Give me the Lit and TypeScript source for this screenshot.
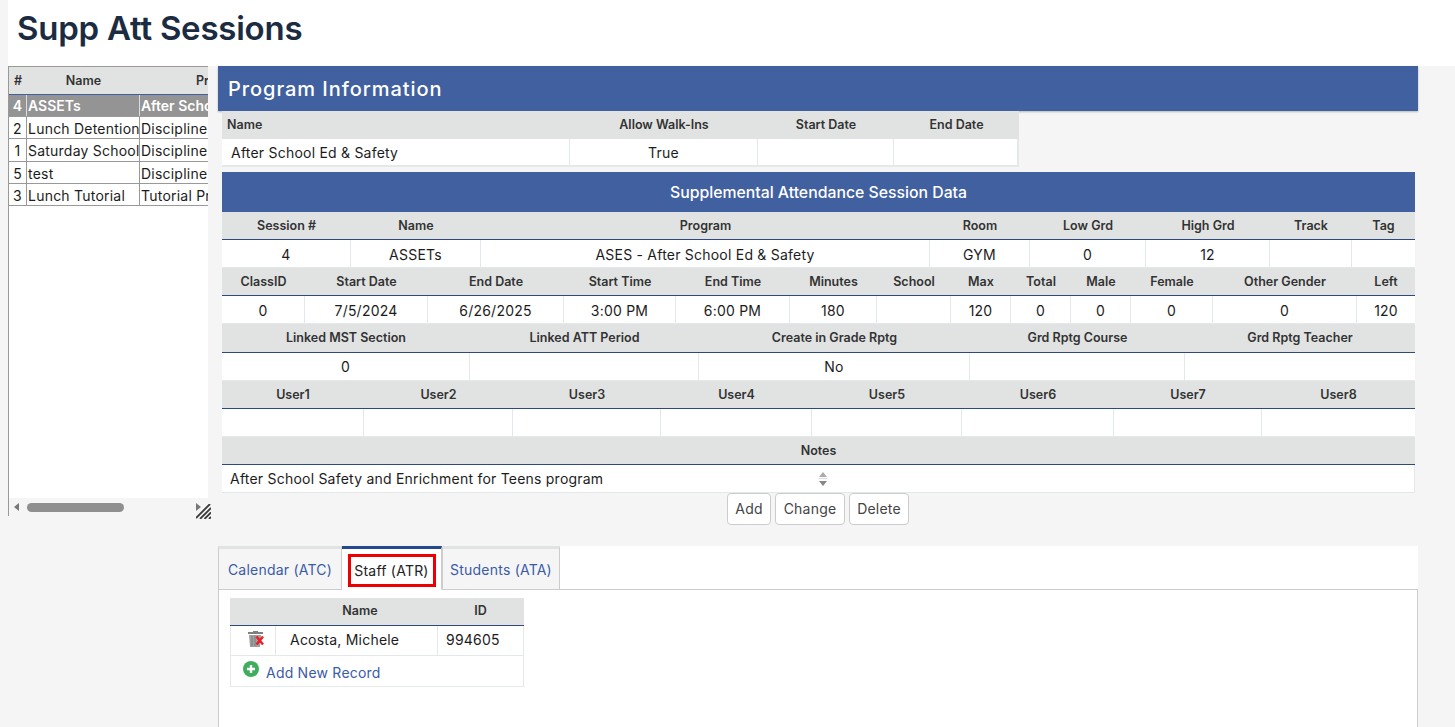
import { LitElement, html, css } from "lit";
import { customElement } from "lit/decorators.js";

type Cell = string;
const bands: { edges: number[]; head: Cell[]; row: Cell[]; h: number }[] = [
  { edges: [222,351,481,930,1030,1146,1270,1352,1415], head: ["Session #","Name","Program","Room","Low Grd","High Grd","Track","Tag"], row: ["4","ASSETs","ASES - After School Ed & Safety","GYM","0","12","",""], h: 28 },
  { edges: [222,305,428,564,676,790,877,951,1011,1071,1131,1213,1357,1415], head: ["ClassID","Start Date","End Date","Start Time","End Time","Minutes","School","Max","Total","Male","Female","Other Gender","Left"], row: ["0","7/5/2024","6/26/2025","3:00 PM","6:00 PM","180","","120","0","0","0","0","120"], h: 28 },
  { edges: [222,470,699,970,1185,1415], head: ["Linked MST Section","Linked ATT Period","Create in Grade Rptg","Grd Rptg Course","Grd Rptg Teacher"], row: ["0","","No","",""], h: 28.5 },
  { edges: [222,364,513,661,812,962,1114,1262,1415], head: ["User1","User2","User3","User4","User5","User6","User7","User8"], row: ["","","","","","","",""], h: 28 },
];
const tpl = (e: number[]) => e.slice(1).map((v, i) => `${v - e[i]}px`).join(" ");
const side = [
  ["4","ASSETs","After School Ed & Safety",22],
  ["2","Lunch Detention","Discipline Program",22],
  ["1","Saturday School","Discipline Program",23],
  ["5","test","Discipline Program",22],
  ["3","Lunch Tutorial","Tutorial Program",22],
] as [string,string,string,number][];

@customElement("app-root")
export class AppRoot extends LitElement {
  static styles = css`
    :host { display: block; position: relative; width: 1455px; height: 727px; overflow: hidden; background: #f5f5f5; font-family: Inter, "Noto Sans", sans-serif; font-size: 14px; letter-spacing: 0.22px; color: #1c1c1c; }
    * { box-sizing: border-box; }
    .title { margin: 0 0 0 8px; height: 66px; background: #fff; padding: 8px 0 0 9px; font-size: 33px; font-weight: 600; line-height: 40px; color: #1b2c42; letter-spacing: -0.23px; }
    .main { display: flex; align-items: flex-start; padding-left: 8px; }
    .side { position: relative; width: 200px; height: 450px; background: #fff; border-top: 1px solid #999; border-left: 1px solid #999; overflow: hidden; flex: none; }
    .shead, .srow { display: grid; grid-template-columns: 18px 113px 200px; width: 331px; }
    .shead { height: 28px; background: #e1e3e3; border-bottom: 1px solid #41609f; font-size: 12.5px; letter-spacing: 0; font-weight: 600; align-items: center; color: #333; text-align: center; }
    .shead span:last-child { text-align: left; padding-left: 56px; }
    .srow { border-bottom: 1px solid #999; line-height: 24px; white-space: nowrap; }
    .srow span { border-right: 1px solid #999; padding-left: 1px; overflow: hidden; }
    .srow span:first-child { text-align: center; padding: 0; }
    .srow.sel { background: #949494; color: #fff; font-weight: 600; line-height: 22px; letter-spacing: 0; }
    .srow.sel span { border-right-color: #ddd; }
    .hscroll { position: absolute; left: 0; right: 0; bottom: 0; height: 18px; background: #f5f5f5; }
    .hinner { display: flex; align-items: center; height: 18px; padding-left: 5px; }
    .thumb { width: 97px; height: 9px; border-radius: 5px; background: #8f8f8f; margin-left: 8px; }
    .arrow { width: 0; height: 0; border-top: 4.5px solid transparent; border-bottom: 4.5px solid transparent; border-right: 5px solid #777; }
    .arrow.next { margin-left: 72px; border-right: none; border-left: 5px solid #777; }
    .grip { position: absolute; left: 196px; top: 504px; }
    .right { position: relative; width: 1247px; height: 661px; background: #f5f5f5; flex: none; }
    .prog { margin-left: 10px; width: 1200px; height: 45px; background: #41609f; color: #fff; font-size: 20px; font-weight: 500; letter-spacing: 0.95px; line-height: 46px; padding-left: 10px; box-shadow: 0 1px 2px rgba(0,0,0,.25); }
    .wrap { margin-left: 14px; width: 1193px; }
    .h { background: #e1e3e3; font-weight: 600; font-size: 12.5px; letter-spacing: 0; color: #333; text-align: center; display: grid; align-items: center; border-bottom: 1px solid #2e4a7d; }
    .r { background: #fff; display: grid; align-items: center; text-align: center; border-bottom: 1px solid #e3e8ea; }
    .r span { border-right: 1px solid #e3e8ea; height: 100%; display: flex; align-items: center; justify-content: center; padding-top: 1px; }
    .r span:last-child { border-right: none; }
    .pi { width: 797px; }
    .pi .h { border-bottom: none; height: 28px; padding-bottom: 2px; }
    .pi .r { height: 28px; border-bottom: 2px solid #e3e8ea; border-right: 2px solid #e3e8ea; }
    .pi .h span:first-child { text-align: left; padding-left: 5px; }
    .pi .r span:first-child { justify-content: flex-start; padding-left: 9px; }
    .band { margin-top: 5px; height: 40px; background: #41609f; color: #fff; font-size: 15.8px; letter-spacing: 0; font-weight: 500; text-align: center; line-height: 41px; }
    .nrow { height: 28px; background: #fff; border-bottom: 1px solid #e3e8ea; border-right: 1px solid #e3e8ea; position: relative; padding-left: 8px; line-height: 28px; }
    .spin { position: absolute; left: 596px; top: 7px; display: block; }
    .btns { display: flex; gap: 4px; margin: 0 0 0 505px; height: 32px; }
    button { font: inherit; letter-spacing: inherit; background: #fff; border: 1px solid #ccc; border-radius: 4px; height: 32px; color: #444; padding: 0 0 2px; }
    .tabs { margin: 21px 0 0 10px; width: 1200px; height: 44px; background: #fff; display: flex; border-bottom: 1px solid #ccc; }
    .tab { height: 44px; background: #f5f5f5; border: 1px solid #ccc; border-top: 3px solid #e1e3e3; color: #3a5ba5; display: flex; align-items: center; justify-content: center; padding-top: 1px; white-space: nowrap; }
    .tab.on { background: #fff; border-top-color: #24488f; border-bottom-color: #fff; color: #222; border-left: none; padding-top: 3px; }
    .tab.on b { font-weight: 400; border: 3px solid #e00; height: 33px; width: 88px; line-height: 27px; text-align: center; display: block; }
    .panel { margin-left: 10px; width: 1200px; height: 137px; background: #fff; border-left: 1px solid #ccc; border-right: 1px solid #ccc; padding: 8px 0 0 11px; }
    .inner { width: 294px; }
    .inner .h { height: 28px; grid-template-columns: 45px 162px 87px; padding-bottom: 2px; }
    .inner .h span:nth-child(2) { padding-left: 8px; }
    .inner .r { height: 30px; grid-template-columns: 45px 162px 87px; border: 1px solid #e3e8ea; border-top: none; }
    .inner .r span { justify-content: flex-start; padding: 0 0 3px 14px; }
    .inner .r span:nth-child(3) { padding-left: 8px; }
    .inner .r span:first-child { padding: 0 0 3px 17px; }
    .add { height: 31px; background: #fff; border: 1px solid #e3e8ea; border-top: none; display: flex; align-items: center; padding: 3px 0 0 12px; gap: 7px; color: #3a5ba5; }
    .add svg { margin-top: -7px; flex: none; }
  `;
  render() {
    return html`
      <div class="title">Supp Att Sessions</div>
      <div class="main">
        <div class="side">
          <div class="shead"><span>#</span><span>Name</span><span>Program</span></div>
          ${side.map((r, i) => html`<div class="srow ${i === 0 ? "sel" : ""}" style="height:${r[3]}px"><span>${r[0]}</span><span>${r[1]}</span><span>${r[2]}</span></div>`)}
          <div class="hscroll"><div class="hinner"><i class="arrow"></i><div class="thumb"></div><i class="arrow next"></i></div></div>
        </div>
        <div class="right">
          <div class="prog">Program Information</div>
          <div class="wrap">
            <div class="pi">
              <div class="h" style="grid-template-columns:${tpl([222,570,758,894,1019])}"><span>Name</span><span>Allow Walk-Ins</span><span>Start Date</span><span>End Date</span></div>
              <div class="r" style="grid-template-columns:${tpl([222,570,758,894,1019])}"><span>After School Ed &amp; Safety</span><span>True</span><span></span><span></span></div>
            </div>
            <div class="band">Supplemental Attendance Session Data</div>
            ${bands.map((b) => html`
              <div class="h" style="height:${b.h}px;grid-template-columns:${tpl(b.edges)}">${b.head.map((c) => html`<span>${c}</span>`)}</div>
              <div class="r" style="height:${b.h}px;grid-template-columns:${tpl(b.edges)}">${b.row.map((c) => html`<span>${c}</span>`)}</div>`)}
            <div class="h" style="height:28px"><span>Notes</span></div>
            <div class="nrow">After School Safety and Enrichment for Teens program
              <svg class="spin" width="10" height="14" viewBox="0 0 10 14"><path d="M5 0l4 5H1z" fill="#aaa"/><path d="M0.5 6.5h9" stroke="#ddd"/><path d="M5 14l4-5H1z" fill="#888"/></svg>
            </div>
            <div class="btns"><button style="width:44px">Add</button><button style="width:70px">Change</button><button style="width:60px">Delete</button></div>
          </div>
          <div class="tabs">
            <div class="tab" style="width:124px">Calendar (ATC)</div>
            <div class="tab on" style="width:100px"><b>Staff (ATR)</b></div>
            <div class="tab" style="width:118px">Students (ATA)</div>
          </div>
          <div class="panel">
            <div class="inner">
              <div class="h"><span></span><span>Name</span><span>ID</span></div>
              <div class="r">
                <span>
                  <svg width="16" height="16" viewBox="0 0 16 16"><path d="M5 0h5v1h5v2H0V1h5z" fill="#7f7f7f"/><path d="M1 4h12l-1 12H2z" fill="#a0a0a0"/><path d="M4 5v10M7 5v10" stroke="#7d7d7d" stroke-width="1"/><path d="M8.5 5.5l6.5 8M15 5.5l-6.5 8" stroke="#ee1c25" stroke-width="2.4"/></svg>
                </span>
                <span>Acosta, Michele</span><span>994605</span>
              </div>
              <div class="add">
                <svg width="16" height="16" viewBox="0 0 16 16"><circle cx="8" cy="8" r="8" fill="#3fae5a"/><path d="M8 4v8M4 8h8" stroke="#fff" stroke-width="2.4"/></svg>
                <span>Add New Record</span>
              </div>
            </div>
          </div>
        </div>
      </div>
      <svg class="grip" width="15" height="15" viewBox="0 0 15 15"><path d="M0 14L14 0M4 15L15 4M8.5 15L15 8.5M13 15l2-2" stroke="#3a3a3a" stroke-width="1.8" fill="none"/></svg>
    `;
  }
}
